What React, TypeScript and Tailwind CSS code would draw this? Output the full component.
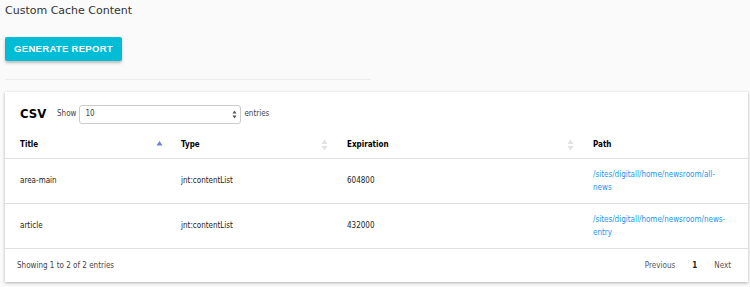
import React from "react";

const rows = [
  { title: "area-main", type: "jnt:contentList", exp: "604800", path: "/sites/digitall/home/newsroom/all-news" },
  { title: "article", type: "jnt:contentList", exp: "432000", path: "/sites/digitall/home/newsroom/news-entry" },
];

function SortIcon({ active }: { active?: boolean }) {
  if (active) {
    return (
      <svg width="7" height="10" viewBox="0 0 7 10" className="shrink-0">
        <path d="M3.5 1 L6.5 5.5 L0.5 5.5 Z" fill="#6f7fd4" />
      </svg>
    );
  }
  return (
    <svg width="7" height="12" viewBox="0 0 7 12" className="shrink-0">
      <path d="M3.5 0.5 L6.5 5 L0.5 5 Z" fill="#e2e2e2" />
      <path d="M3.5 11.5 L6.5 7 L0.5 7 Z" fill="#e2e2e2" />
    </svg>
  );
}

const cols = "grid grid-cols-[161px_166px_246px_170px]";

export default function App() {
  return (
    <div className="w-[750px] h-[287px] bg-[#fafafa] font-['DejaVu_Sans',sans-serif] text-[#333] overflow-hidden">
      <div className="pl-[5px] pt-[3px] text-[11px] leading-[16px]">Custom Cache Content</div>

      <div className="pl-[5px] pt-[18px]">
        <button
          type="button"
          className="block h-[24px] w-[117px] rounded-[2px] bg-[#00bcd4] text-white font-['Liberation_Sans',Arial,sans-serif] text-[9.5px] font-bold tracking-[0.3px] shadow-[0_2px_3px_rgba(0,0,0,0.25)]"
        >
          GENERATE REPORT
        </button>
      </div>

      <div className="ml-[5px] mt-[18px] w-[366px] h-px bg-[#ececec]" />

      <div className="ml-[5px] mt-[12px] w-[743px] bg-white shadow-[0_1px_3px_rgba(0,0,0,0.3)] font-stretch-condensed">
        <div className="flex items-center h-[40px] pl-[15px] pt-[4px]">
          <span className="text-[13px] font-bold text-black w-[37px]">CSV</span>
          <span className="text-[8px] text-[#444]">Show</span>
          <div className="ml-[3px] w-[162px] h-[19px] border border-[#ccc] rounded-[3px] flex items-center justify-between pl-[5px] pr-[3px] bg-white">
            <span className="text-[8px] text-[#444]">10</span>
            <svg width="5" height="9" viewBox="0 0 5 9">
              <path d="M2.5 0.5 L4.5 3.5 L0.5 3.5 Z" fill="#555" />
              <path d="M2.5 8.5 L4.5 5.5 L0.5 5.5 Z" fill="#555" />
            </svg>
          </div>
          <span className="ml-[3px] text-[8px] text-[#444]">entries</span>
        </div>

        <div className={`${cols} h-[27px] items-center border-b border-[#e0e0e0] text-[8px] font-bold text-black`}>
          <div className="pl-[15px] pr-[3px] flex items-center justify-between">
            Title <SortIcon active />
          </div>
          <div className="pl-[15px] pr-[4px] flex items-center justify-between">
            Type <SortIcon />
          </div>
          <div className="pl-[15px] pr-[4px] flex items-center justify-between">
            Expiration <SortIcon />
          </div>
          <div className="pl-[15px]">Path</div>
        </div>

        {rows.map((r) => (
          <div key={r.title} className={`${cols} h-[45px] items-center border-b border-[#e0e0e0] text-[8px] text-[#222]`}>
            <div className="pl-[15px]">{r.title}</div>
            <div className="pl-[15px]">{r.type}</div>
            <div className="pl-[15px]">{r.exp}</div>
            <div className="pl-[15px] pr-[25px] text-[#2196f3] leading-[13px]">{r.path}</div>
          </div>
        ))}

        <div className="flex items-center justify-between h-[33px] pl-[12px] pr-[17px] text-[8px] text-[#444]">
          <span>Showing 1 to 2 of 2 entries</span>
          <div className="flex items-center gap-[17px] text-[#555]">
            <span>Previous</span>
            <span className="font-bold text-[#222]">1</span>
            <span>Next</span>
          </div>
        </div>
      </div>
    </div>
  );
}
